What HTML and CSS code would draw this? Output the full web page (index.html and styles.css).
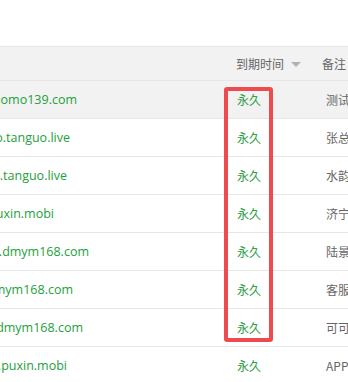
FILE: index.html
```html
<!DOCTYPE html>
<html lang="zh-CN">
<head>
<meta charset="utf-8">
<title>域名列表</title>
<link rel="stylesheet" href="styles.css">
</head>
<body>
<div class="page">
  <div class="table">
    <div class="row head">
      <div class="cell c1"></div>
      <div class="cell c2"><span>到期时间</span><i class="sort"></i></div>
      <div class="cell c3">备注</div>
    </div>
    <div class="row hl">
      <div class="cell c1"><span class="dom" style="width:77px">momo139.com</span></div>
      <div class="cell c2 exp">永久</div>
      <div class="cell c3">测试</div>
    </div>
    <div class="row">
      <div class="cell c1"><span class="dom" style="width:70px">o.tanguo.live</span></div>
      <div class="cell c2 exp">永久</div>
      <div class="cell c3">张总</div>
    </div>
    <div class="row">
      <div class="cell c1"><span class="dom" style="width:67px">s.tanguo.live</span></div>
      <div class="cell c2 exp">永久</div>
      <div class="cell c3">水韵</div>
    </div>
    <div class="row">
      <div class="cell c1"><span class="dom" style="width:54px">puxin.mobi</span></div>
      <div class="cell c2 exp">永久</div>
      <div class="cell c3">济宁</div>
    </div>
    <div class="row">
      <div class="cell c1"><span class="dom" style="width:89px">w.dmym168.com</span></div>
      <div class="cell c2 exp">永久</div>
      <div class="cell c3">陆景</div>
    </div>
    <div class="row">
      <div class="cell c1"><span class="dom" style="width:73px">dmym168.com</span></div>
      <div class="cell c2 exp">永久</div>
      <div class="cell c3">客服</div>
    </div>
    <div class="row">
      <div class="cell c1"><span class="dom" style="width:83px">.dmym168.com</span></div>
      <div class="cell c2 exp">永久</div>
      <div class="cell c3">可可</div>
    </div>
    <div class="row">
      <div class="cell c1"><span class="dom" style="width:67px">w.puxin.mobi</span></div>
      <div class="cell c2 exp">永久</div>
      <div class="cell c3">APP</div>
    </div>
  </div>
  <div class="mark"></div>
</div>
</body>
</html>
```
FILE: styles.css
```css
html, body {
  margin: 0;
  padding: 0;
  background: #fff;
}
.page {
  position: relative;
  width: 348px;
  height: 382px;
  overflow: hidden;
  padding-top: 46px;
  box-sizing: border-box;
  font-family: "Open Sans", "Noto Sans CJK SC", sans-serif;
  font-size: 12px;
  color: #666;
}
.table {
  border-top: 1px solid #e6e6e6;
}
.row {
  display: grid;
  grid-template-columns: 221px 86px 1fr;
  height: 38px;
  box-sizing: border-box;
  border-bottom: 1px solid #e6e6e6;
  background: #fff;
}
.row.head {
  height: 34px;
  background: #f2f2f2;
}
.row.hl {
  background: #f2f2f2;
}
.cell {
  display: flex;
  align-items: center;
  white-space: nowrap;
  overflow: hidden;
}
.c2 {
  padding-left: 15px;
}
.head .c3 {
  padding-left: 15px;
}
.c3 {
  padding-left: 19px;
  font-family: "Noto Sans CJK SC", sans-serif;
}
.head .c2 span {
  font-family: "Noto Sans CJK SC", sans-serif;
}
.c2.exp {
  padding-left: 16px;
  color: #2aa043;
  font-family: "Noto Sans CJK SC", sans-serif;
}
.dom {
  display: flex;
  justify-content: flex-end;
  overflow: hidden;
  color: #22a03c;
  font-size: 12.5px;
}
.sort {
  display: block;
  width: 0;
  height: 0;
  margin-left: 7px;
  margin-top: 1px;
  border-left: 5px solid transparent;
  border-right: 5px solid transparent;
  border-top: 5px solid #b2b2b2;
}
.mark {
  position: absolute;
  left: 224px;
  top: 87px;
  width: 49px;
  height: 255px;
  box-sizing: border-box;
  border: 4px solid #ef4a4e;
  border-radius: 3px;
}
```
